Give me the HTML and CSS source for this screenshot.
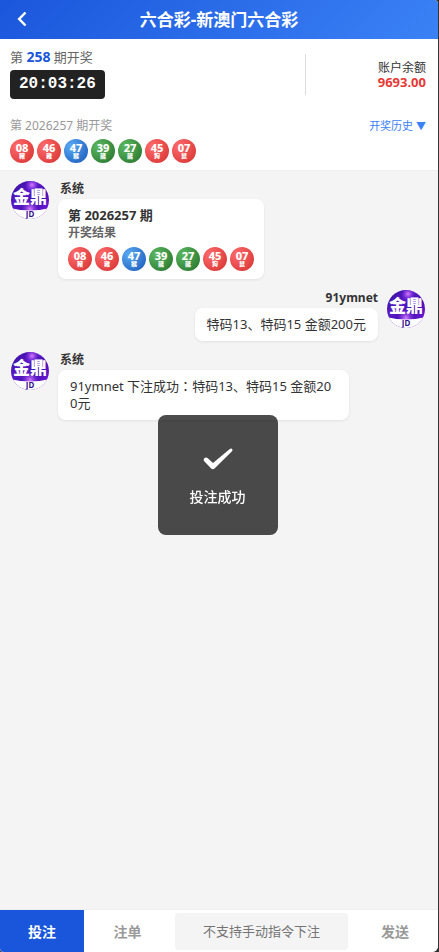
FILE: index.html
```html
<!DOCTYPE html>
<html lang="zh-CN">
<head>
  <meta charset="utf-8">
  <meta name="viewport" content="width=device-width, initial-scale=1">
  <title>六合彩-新澳门六合彩</title>
  <link rel="stylesheet" href="styles.css">
</head>
<body>

<!-- shared avatar -->
<svg class="defs" width="0" height="0" aria-hidden="true">
  <defs>
    <linearGradient id="night" x1="0" y1="0" x2="1" y2="1">
      <stop offset="0" stop-color="#2a0a8c"/>
      <stop offset="0.35" stop-color="#5a1ac8"/>
      <stop offset="0.6" stop-color="#4410b0"/>
      <stop offset="1" stop-color="#8a1cf0"/>
    </linearGradient>
    <radialGradient id="glow">
      <stop offset="0" stop-color="#d880ff"/>
      <stop offset="1" stop-color="#8a30e8" stop-opacity="0"/>
    </radialGradient>
    <clipPath id="round"><circle cx="20" cy="20" r="19"/></clipPath>
    <symbol id="avatar" viewBox="0 0 40 40">
      <g clip-path="url(#round)">
        <rect width="40" height="40" fill="url(#night)"/>
        <circle cx="22" cy="5" r="7" fill="url(#glow)"/>
        <circle cx="20" cy="29" r="9" fill="url(#glow)"/>
        <path d="M0 28 Q20 33 40 28 V40 H0 Z" fill="#fff"/>
        <text class="logo-name" x="20" y="23" text-anchor="middle">金鼎</text>
        <text class="logo-sub" x="20" y="37" text-anchor="middle">JD</text>
      </g>
    </symbol>
  </defs>
</svg>

<div class="app">
  <header class="topbar">
    <button class="back" type="button" aria-label="返回">
      <svg width="10" height="18" viewBox="0 0 10 18"><path d="M8.500 1.500 L2.200 8 L8.500 14.500"/></svg>
    </button>
    <h1 class="title">六合彩-新澳门六合彩</h1>
  </header>

  <section class="panel">
    <div class="status">
      <div class="countdown">
        <p class="issue">第 <b>258</b> 期开奖</p>
        <time class="clock">20:03:26</time>
      </div>
      <div class="balance">
        <span>账户余额</span>
        <strong>9693.00</strong>
      </div>
    </div>
    <div class="last">
      <span>第 2026257 期开奖</span>
      <button class="history" type="button">开奖历史 <span class="arrow">▼</span></button>
    </div>
    <div class="balls">
      <span class="ball red">08<i>豬</i></span>
      <span class="ball red">46<i>雞</i></span>
      <span class="ball blue">47<i>猴</i></span>
      <span class="ball green">39<i>龍</i></span>
      <span class="ball green">27<i>龍</i></span>
      <span class="ball red">45<i>狗</i></span>
      <span class="ball red">07<i>鼠</i></span>
    </div>
  </section>

  <main class="chat">
    <article class="msg">
      <svg class="avatar"><use href="#avatar"/></svg>
      <div class="body">
        <div class="name">系统</div>
        <div class="bubble result">
          <div class="result-title">第 2026257 期</div>
          <div class="result-sub">开奖结果</div>
          <div class="balls">
            <span class="ball red">08<i>豬</i></span>
            <span class="ball red">46<i>雞</i></span>
            <span class="ball blue">47<i>猴</i></span>
            <span class="ball green">39<i>龍</i></span>
            <span class="ball green">27<i>龍</i></span>
            <span class="ball red">45<i>狗</i></span>
            <span class="ball red">07<i>鼠</i></span>
          </div>
        </div>
      </div>
    </article>

    <article class="msg mine">
      <svg class="avatar"><use href="#avatar"/></svg>
      <div class="body">
        <div class="name">91ymnet</div>
        <div class="bubble">特码13、特码15 金额200元</div>
      </div>
    </article>

    <article class="msg">
      <svg class="avatar"><use href="#avatar"/></svg>
      <div class="body">
        <div class="name">系统</div>
        <div class="bubble">91ymnet 下注成功<span lang="zh-TW">：</span>特码13、特码15 金额200元</div>
      </div>
    </article>
  </main>

  <form class="bottom">
    <button class="tab active" type="button">投注</button>
    <button class="tab" type="button">注单</button>
    <input class="command" type="text" placeholder="不支持手动指令下注" aria-label="指令">
    <button class="tab" type="button">发送</button>
  </form>
</div>

<div class="toast" role="status">
  <svg width="30" height="22" viewBox="0 0 30 22"><path d="M1.500 10 Q3 9 4.500 10 L10 15 L26.800 1 Q28.500 0 29.400 1.500 Q29.600 2.500 29 3.200 L11.500 20.500 Q9.800 22 8.200 20.500 L.8 12.800 Q.3 11 1.500 10 Z"/></svg>
  <span>投注成功</span>
</div>

</body>
</html>
```
FILE: styles.css
```css
* {
  box-sizing: border-box;
}

body {
  margin: 0;
  background: #333;
  color: #333;
  font-family: "Noto Sans", "Noto Sans CJK SC", sans-serif;
  font-size: 13px;
  line-height: 17px;
}

button,
input {
  border: 0;
  padding: 0;
  background: none;
  font: inherit;
}

.defs {
  position: absolute;
}

.app {
  display: flex;
  flex-direction: column;
  min-height: 100vh;
  margin-right: 1px;
  background: #f4f4f4;
  border-radius: 0 4px 6px 4px;
  overflow: hidden;
}

/* header */
.topbar {
  display: grid;
  grid-template-columns: 44px 1fr 44px;
  align-items: center;
  height: 39px;
  background: linear-gradient(135deg, #1a56db, #3b82f6);
  color: #fff;
}

.back {
  display: flex;
  justify-content: center;
}

.back path {
  fill: none;
  stroke: #fff;
  stroke-width: 2.5;
}

.title {
  margin: 0;
  font-size: 17px;
  line-height: 24px;
  text-align: center;
}

/* draw info */
.panel {
  padding: 10px 12px 7px 10px;
  background: #fff;
  border-bottom: 1px solid #eee;
}

.status {
  display: flex;
  justify-content: space-between;
  align-items: center;
}

.issue {
  margin: 0 0 4px;
  color: #666;
}

.issue b {
  color: #1a56db;
  font-size: 14px;
  line-height: 1;
}

.clock {
  display: block;
  width: max-content;
  padding: 0 9px;
  border-radius: 4px;
  background: #222;
  color: #fff;
  font: bold 16px/29px "Liberation Mono", monospace;
}

.balance {
  display: flex;
  flex-direction: column;
  justify-content: center;
  align-items: flex-end;
  width: 29%;
  height: 41px;
  padding-top: 2px;
  border-left: 1px solid #ddd;
  font-size: 12px;
  line-height: 15px;
}

.balance strong {
  color: #e53935;
  font-size: 13px;
}

.last {
  display: flex;
  justify-content: space-between;
  margin: 18px 0 5px;
  color: #999;
  font-size: 12px;
}

.history {
  color: #3b82f6;
  font-size: 11px;
}

.arrow {
  font-size: 10px;
  line-height: 1;
}

.balls {
  display: flex;
  gap: 3px;
}

.ball {
  display: flex;
  flex-direction: column;
  align-items: center;
  width: 24px;
  height: 24px;
  padding-top: 4px;
  border-radius: 50%;
  color: #fff;
  font-size: 11px;
  font-weight: 800;
  line-height: 10px;
}

.ball i {
  font-size: 6px;
  font-style: normal;
  line-height: 7px;
}

.red {
  background: radial-gradient(circle at 30% 30%, #ff6b6b, #d32f2f);
}

.blue {
  background: radial-gradient(circle at 30% 30%, #5aa9f5, #1556b5);
}

.green {
  background: radial-gradient(circle at 30% 30%, #5cb860, #23702a);
}

/* messages */
.chat {
  flex: 1;
  display: flex;
  flex-direction: column;
  gap: 10px;
  padding: 9px 12px 9px 10px;
}

.msg {
  display: flex;
  align-items: flex-start;
  gap: 8px;
}

.mine {
  flex-direction: row-reverse;
}

.avatar {
  flex: none;
  width: 40px;
  height: 40px;
}

.logo-name {
  fill: #fff;
  font-size: 17px;
  font-weight: 900;
}

.logo-sub {
  fill: #35108c;
  font-size: 8px;
  font-weight: bold;
}

.body {
  display: flex;
  flex-direction: column;
  align-items: flex-start;
  max-width: 291px;
}

.mine .body {
  align-items: flex-end;
}

.name {
  padding: 0 2px;
  margin-bottom: 2px;
  font-size: 12px;
  font-weight: bold;
}

.mine .name {
  padding: 0;
}

.bubble {
  padding: 8px 12px;
  border-radius: 8px;
  background: #fff;
  box-shadow: 0 1px 3px rgba(0, 0, 0, .08);
  word-break: break-all;
}

.result {
  padding: 7px 10px 8px;
}

.result-title {
  font-size: 13px;
  font-weight: bold;
  line-height: 18px;
}

.result-sub {
  margin-bottom: 5px;
  color: #666;
  font-size: 12px;
  font-weight: bold;
  line-height: 18px;
}

/* bottom bar */
.bottom {
  display: grid;
  grid-template-columns: 84px 87px 1fr 86px;
  height: 43px;
  background: #fff;
  border-top: 1px solid #eee;
}

.tab {
  color: #999;
  font-size: 14px;
  font-weight: bold;
}

.active {
  background: #1a56db;
  color: #fff;
}

.command {
  min-width: 0;
  margin: 3px 4px 2px;
  border-radius: 4px;
  background: #f4f4f4;
  text-align: center;
}

.command::placeholder {
  color: #757575;
}

/* toast */
.toast {
  position: fixed;
  top: 50%;
  left: 50%;
  display: flex;
  flex-direction: column;
  align-items: center;
  justify-content: center;
  gap: 18px;
  width: 120px;
  height: 120px;
  margin: -61px 0 0 -62px;
  padding-top: 3px;
  border-radius: 8px;
  background: rgba(0, 0, 0, .7);
  color: #fff;
  font-size: 14px;
  font-weight: 500;
}

.toast path {
  fill: #fff;
}
```
